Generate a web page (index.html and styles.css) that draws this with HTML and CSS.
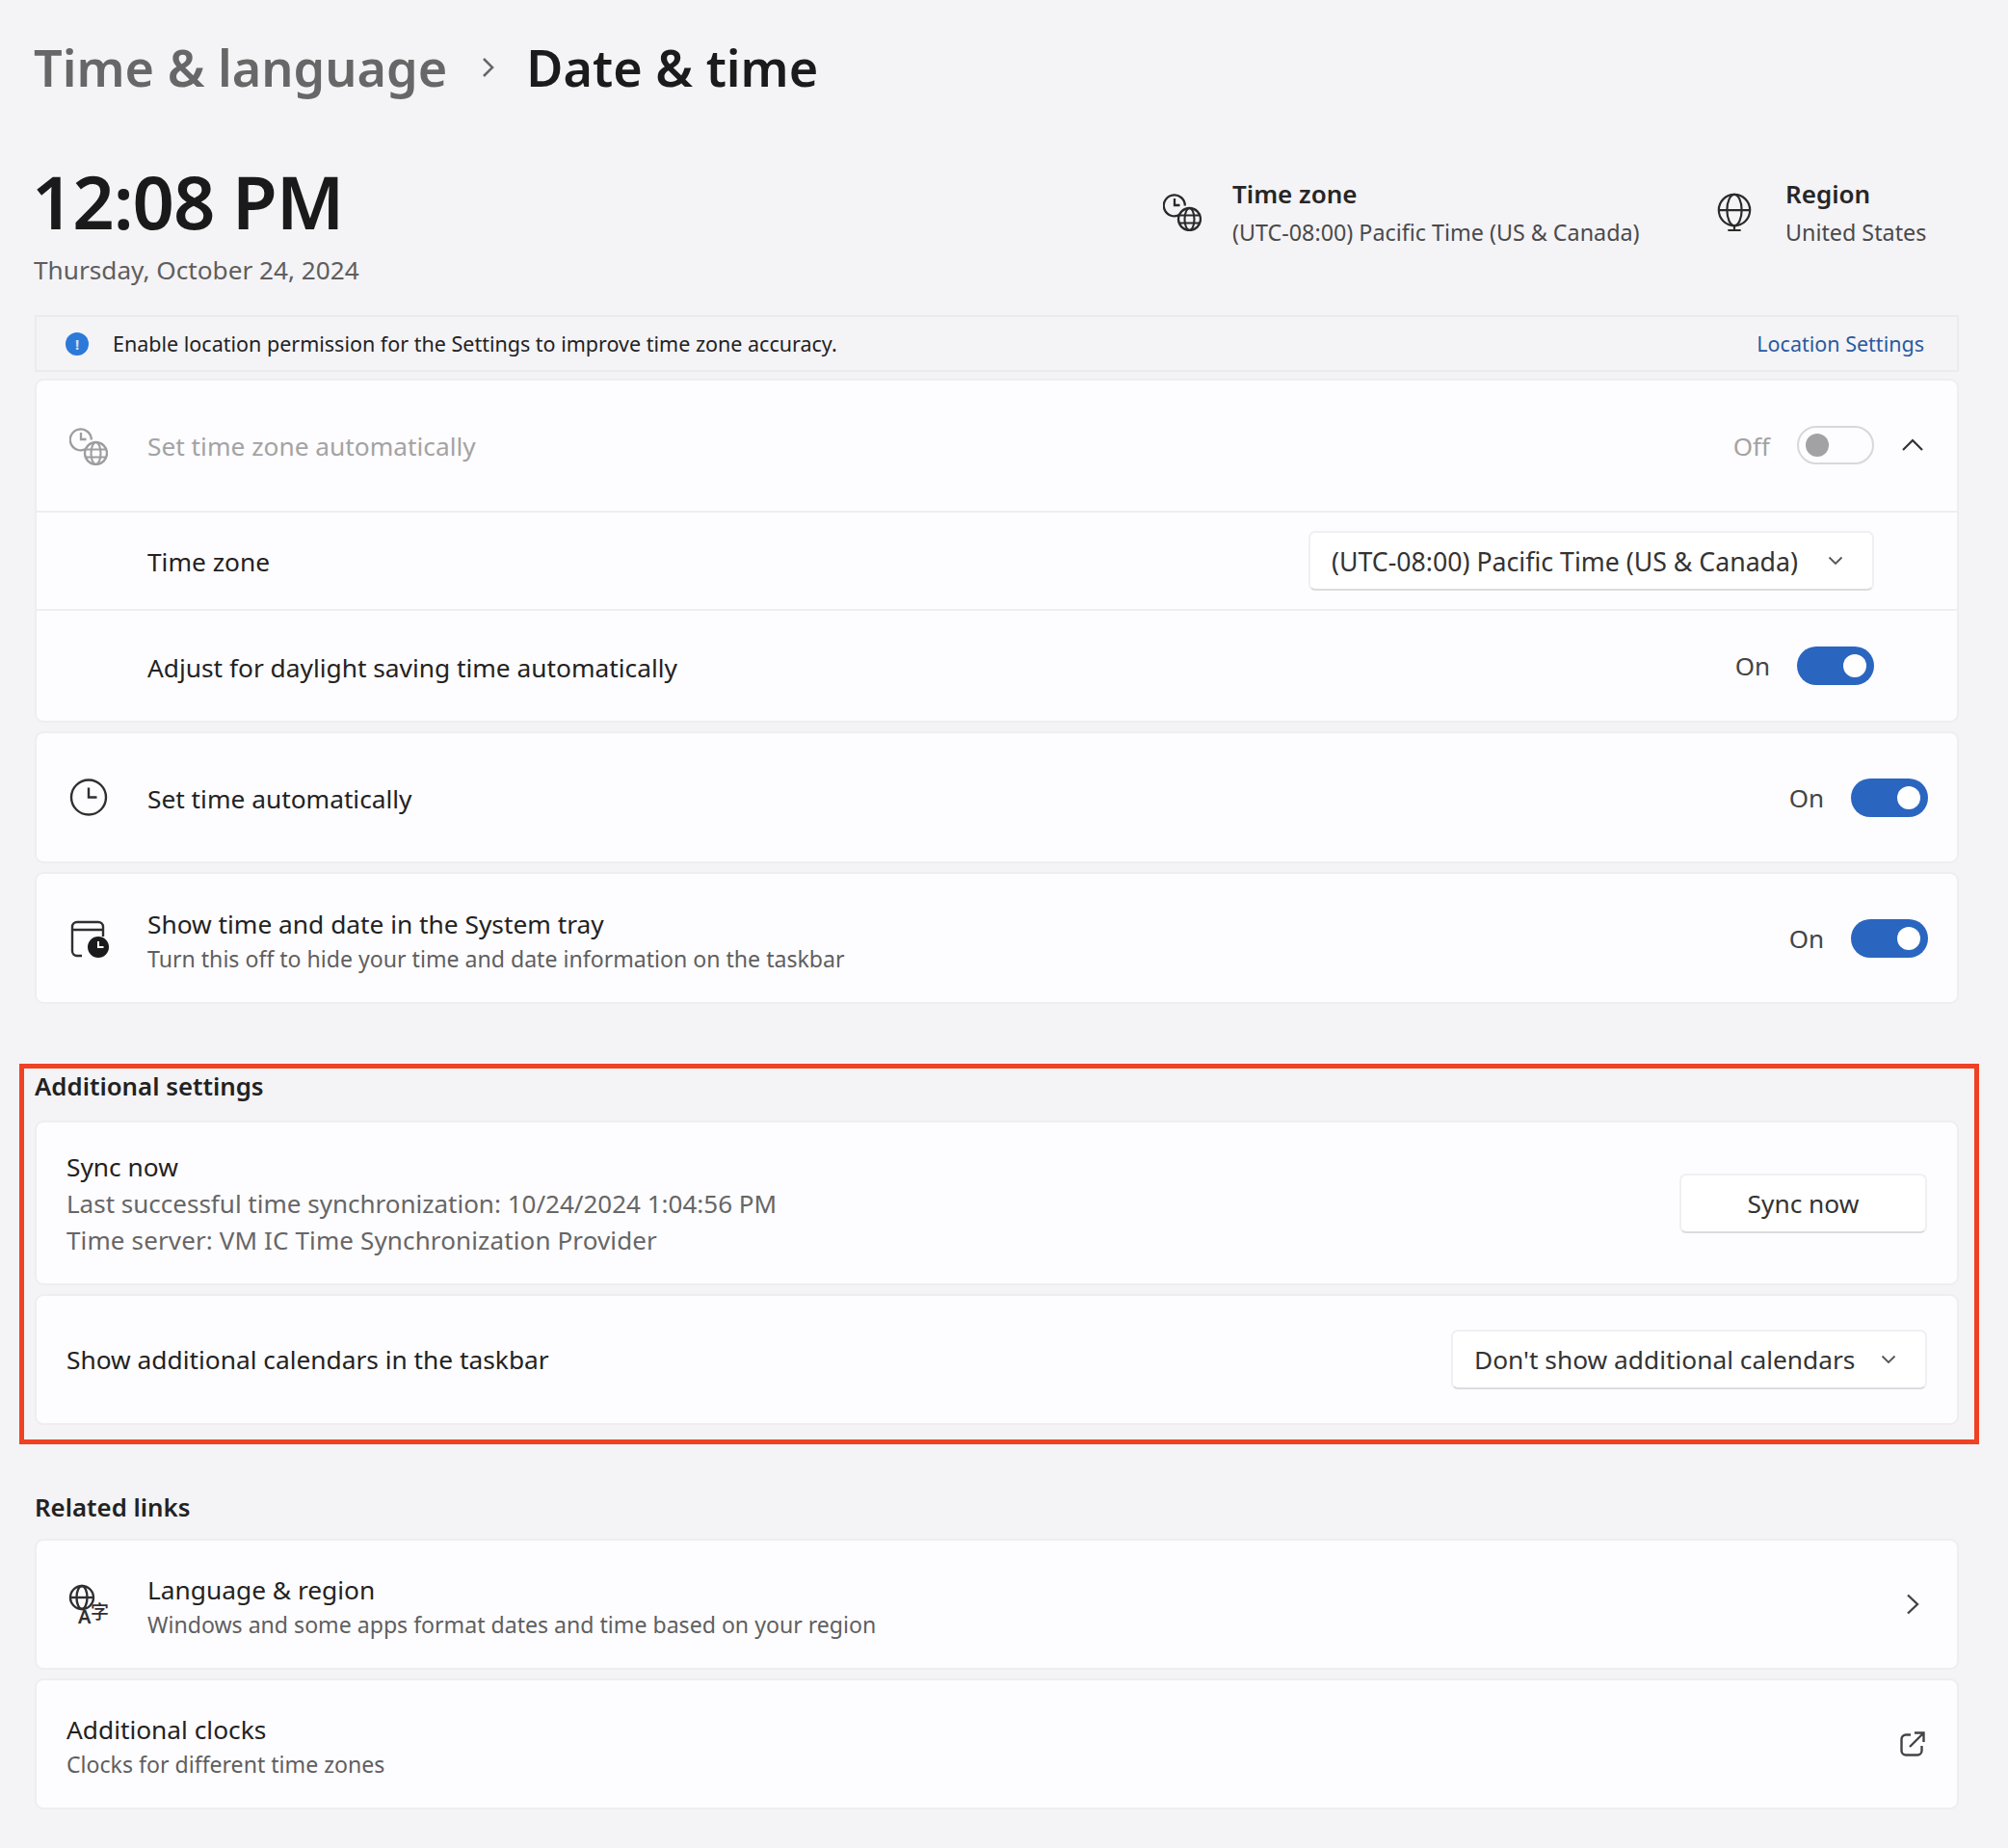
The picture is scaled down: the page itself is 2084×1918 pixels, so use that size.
FILE: index.html
```html
<!DOCTYPE html>
<html lang="en">
<head>
<meta charset="utf-8">
<title>Date &amp; time</title>
<link rel="stylesheet" href="styles.css">
</head>
<body>
<svg class="defs" width="0" height="0" aria-hidden="true">
  <defs>
    <symbol id="i-clockglobe" viewBox="0 0 40 40">
      <path d="M17.500 22.800A11 11 0 1 1 22.800 13.500M12 6v7h5.500" fill="none" stroke="currentColor" stroke-width="2.300"/>
      <circle cx="27.500" cy="27.500" r="11.500" fill="none" stroke="currentColor" stroke-width="2.300"/>
      <ellipse cx="27.500" cy="27.500" rx="5" ry="11.500" fill="none" stroke="currentColor" stroke-width="2.100"/>
      <path d="M16.500 23.500h22M16.500 31.500h22" fill="none" stroke="currentColor" stroke-width="2.100"/>
    </symbol>
  </defs>
</svg>
<main class="page">
  <h1 class="crumbs">
    <span class="crumb-parent">Time &amp; language</span>
    <svg class="crumb-sep" viewBox="0 0 14 22"><path d="M2 2l9 9-9 9" fill="none" stroke="currentColor" stroke-width="2.600"/></svg>
    <span class="crumb-current">Date &amp; time</span>
  </h1>

  <header class="clock">
    <div class="clock-main">
      <div class="clock-time">12:08 PM</div>
      <div class="clock-date">Thursday, October 24, 2024</div>
    </div>
    <div class="clock-fact clock-fact-zone">
      <svg class="fact-icon"><use href="#i-clockglobe"/></svg>
      <div>
        <div class="fact-title">Time zone</div>
        <div class="fact-value">(UTC-08:00) Pacific Time (US &amp; Canada)</div>
      </div>
    </div>
    <div class="clock-fact clock-fact-region">
      <svg class="fact-icon" viewBox="0 0 40 42">
        <g fill="none" stroke="currentColor" stroke-width="2.300">
          <circle cx="20" cy="19" r="17"/>
          <ellipse cx="20" cy="19" rx="8" ry="17"/>
          <path d="M3 19h34M20 36v5M13 41h14"/>
        </g>
      </svg>
      <div>
        <div class="fact-title">Region</div>
        <div class="fact-value">United States</div>
      </div>
    </div>
  </header>

  <div class="notice">
    <span class="notice-dot">!</span>
    <span class="notice-text">Enable location permission for the Settings to improve time zone accuracy.</span>
    <a class="notice-link">Location Settings</a>
  </div>

  <section class="card">
    <div class="row row-auto is-disabled">
      <svg class="row-icon"><use href="#i-clockglobe"/></svg>
      <div class="row-label">Set time zone automatically</div>
      <span class="toggle-label">Off</span>
      <span class="toggle toggle-off"></span>
      <svg class="row-chevron" viewBox="0 0 24 14"><path d="M2 12L12 2l10 10" fill="none" stroke="#333" stroke-width="2.200"/></svg>
    </div>
    <div class="row row-zone">
      <div class="row-label row-label-indent">Time zone</div>
      <div class="select select-zone"><span>(UTC-08:00) Pacific Time (US &amp; Canada)</span>
        <svg class="select-chevron" viewBox="0 0 16 10"><path d="M1.500 1.500L8 8l6.500-6.500" fill="none" stroke="currentColor" stroke-width="1.800"/></svg>
      </div>
      <span class="slot"></span>
    </div>
    <div class="row row-dst">
      <div class="row-label row-label-indent">Adjust for daylight saving time automatically</div>
      <span class="toggle-label">On</span>
      <span class="toggle toggle-on"></span>
      <span class="slot"></span>
    </div>
  </section>

  <section class="card card-single">
    <div class="row">
      <svg class="row-icon" viewBox="0 0 40 40"><g fill="none" stroke="currentColor" stroke-width="2.400"><circle cx="20" cy="19.500" r="18"/><path d="M20 9.500v10h8.500"/></g></svg>
      <div class="row-label">Set time automatically</div>
      <span class="toggle-label">On</span>
      <span class="toggle toggle-on"></span>
    </div>
  </section>

  <section class="card card-single">
    <div class="row">
      <svg class="row-icon" viewBox="0 0 40 40">
        <path d="M13 38H8a5 5 0 0 1-5-5V8a5 5 0 0 1 5-5h22a5 5 0 0 1 5 5v10M3 11h32" fill="none" stroke="currentColor" stroke-width="2.400"/>
        <circle cx="30" cy="29" r="11" fill="#1b1b1b"/>
        <path d="M30 23v6h5.500" fill="none" stroke="#fff" stroke-width="2"/>
      </svg>
      <div class="row-text">
        <div class="row-label">Show time and date in the System tray</div>
        <div class="row-sub">Turn this off to hide your time and date information on the taskbar</div>
      </div>
      <span class="toggle-label">On</span>
      <span class="toggle toggle-on"></span>
    </div>
  </section>

  <section class="highlight">
    <h2 class="group-title">Additional settings</h2>
    <div class="card card-sync">
      <div class="row row-plain">
        <div class="sync-text">
          <div class="row-label sync-line">Sync now</div>
          <div class="sync-line sync-muted">Last successful time synchronization: 10/24/2024 1:04:56 PM</div>
          <div class="sync-line sync-muted sync-server">Time server: VM IC Time Synchronization Provider</div>
        </div>
        <button class="button">Sync now</button>
      </div>
    </div>
    <div class="card card-cal">
      <div class="row row-plain">
        <div class="row-label row-grow">Show additional calendars in the taskbar</div>
        <div class="select select-cal"><span>Don't show additional calendars</span>
          <svg class="select-chevron" viewBox="0 0 16 10"><path d="M1.500 1.500L8 8l6.500-6.500" fill="none" stroke="currentColor" stroke-width="1.800"/></svg>
        </div>
      </div>
    </div>
  </section>

  <h2 class="group-title group-title-links">Related links</h2>
  <section class="card card-link">
    <div class="row">
      <svg class="row-icon" viewBox="0 0 40 40">
        <g fill="none" stroke="currentColor" stroke-width="2.400">
          <circle cx="13" cy="13" r="12"/><ellipse cx="13" cy="13" rx="5.500" ry="12"/><path d="M1 13h24"/>
        </g>
        <text class="icon-a" x="9" y="39.500">A</text>
        <text class="icon-zi" x="22" y="35">字</text>
      </svg>
      <div class="row-text">
        <div class="row-label">Language &amp; region</div>
        <div class="row-sub">Windows and some apps format dates and time based on your region</div>
      </div>
      <svg class="row-end-icon row-end-chevron" viewBox="0 0 14 22"><path d="M2 1.500L12 11 2 20.500" fill="none" stroke="currentColor" stroke-width="2.400"/></svg>
    </div>
  </section>
  <section class="card card-link">
    <div class="row row-plain">
      <div class="row-text">
        <div class="row-label">Additional clocks</div>
        <div class="row-sub">Clocks for different time zones</div>
      </div>
      <svg class="row-end-icon row-end-ext" viewBox="0 0 26 26"><path d="M11 3.500H6a4.500 4.500 0 0 0-4.500 4.500v12A4.500 4.500 0 0 0 6 24.500h12a4.500 4.500 0 0 0 4.500-4.500v-5M10 16L24 2M15 1.500h9.500V11" fill="none" stroke="currentColor" stroke-width="2.400"/></svg>
    </div>
  </section>
</main>
</body>
</html>
```
FILE: styles.css
```css
* { box-sizing: border-box; }
html, body { margin: 0; padding: 0; }
body {
  width: 2084px;
  height: 1918px;
  overflow: hidden;
  background: #f4f3f6;
  color: #1c1c1c;
  font-family: "Noto Sans", "Noto Sans CJK SC", sans-serif;
  font-size: 26px;
}
.defs { position: absolute; }
.page { padding: 0 51px 0 36px; }

.crumbs {
  display: flex;
  align-items: center;
  height: 140px;
  margin: 0 0 0 -1px;
  padding-bottom: 1px;
  font-size: 52.200px;
  font-weight: 600;
}
.crumb-parent { color: #676767; }
.crumb-current { color: #1b1b1b; }
.crumb-sep { width: 14px; height: 22px; margin: 0 32px 0 36px; color: #666; }

.clock {
  display: flex;
  height: 187px;
}
.clock-main { flex: 1; }
.clock-time { font-size: 76px; font-weight: 600; line-height: 96px; margin: 21px 0 0 -3px; letter-spacing: -1.1px; color: #1a1a1a; }
.clock-date { font-size: 26.200px; line-height: 34px; margin: 6px 0 0 -1px; color: #5e5e5e; }
.clock-fact { display: flex; align-items: flex-start; padding-top: 43px; }
.clock-fact-zone { width: 573px; }
.clock-fact-region { width: 253px; }
.fact-icon { width: 40px; height: 40px; flex: none; margin-top: 17px; margin-right: 32px; color: #2a2a2a; }
.clock-fact-region .fact-icon { margin-right: 33px; }
.fact-title { font-size: 26px; font-weight: 600; line-height: 36px; color: #262626; }
.fact-value { font-size: 23.300px; line-height: 32px; margin-top: 6px; color: #4a4a4a; }

.notice {
  display: flex;
  align-items: center;
  height: 59px;
  padding: 0 34px 0 30px;
  margin-bottom: 7px;
  border: 2px solid #ebeaed;
  font-size: 21.500px;
}
.notice-dot {
  width: 24px;
  height: 24px;
  margin-right: 25px;
  border-radius: 50%;
  background: #2b7ad9;
  color: #cfe2f8;
  font-size: 15px;
  font-weight: 700;
  line-height: 24px;
  text-align: center;
}
.notice-text { flex: 1; color: #222; }
.notice-link { color: #2a5a9e; }

.card {
  margin-bottom: 9px;
  background: #fdfcfe;
  border: 2px solid #eeedef;
  border-radius: 9px;
}
.card-single { height: 137px; }
.card-cal { height: 136px; }
.card-link { height: 136px; }
.card-sync { height: 171px; }
.row {
  display: flex;
  align-items: center;
  height: 100%;
  padding: 0 30px 0 34px;
}
.row-plain { padding-left: 31px; padding-right: 31px; }
.row-auto { height: 137px; padding-right: 34px; border-bottom: 2px solid #eeedef; }
.row-zone { height: 102px; border-bottom: 2px solid #eeedef; padding-right: 34px; }
.row-dst { height: 114px; padding-right: 34px; }
.row-icon { width: 40px; height: 40px; flex: none; margin-right: 41px; color: #2f2f2f; overflow: visible; }
.row-label { font-size: 26.300px; color: #222; }
.row > .row-label { flex: 1; padding-top: 2px; }
.row-auto > .row-label, .row > .row-grow { padding-top: 0; }
.row-dst > .row-label { padding-top: 3px; }
.row-label-indent { padding-left: 81px; }
.row-text { flex: 1; padding-top: 3px; }
.card-link .row-text { padding-top: 1px; }
.row-sub { font-size: 23.100px; line-height: 30px; margin-top: 2px; color: #5f5f5f; }
.row-text .row-label { line-height: 38px; }
.is-disabled .row-label, .is-disabled .toggle-label { color: #a3a3a3; }
.is-disabled .row-icon { color: #9d9d9d; }

.toggle-label { margin-right: 28px; font-size: 26px; color: #444; }
.toggle { flex: none; width: 80px; height: 40px; border-radius: 20px; display: flex; align-items: center; }
.toggle-on { background: #2a66c0; justify-content: flex-end; padding-right: 8px; }
.toggle-on::after { content: ""; width: 24px; height: 24px; border-radius: 50%; background: #fff; }
.toggle-off { border: 2px solid #d8d7da; background: #fdfcfe; padding-left: 7px; }
.toggle-off::after { content: ""; width: 24px; height: 24px; border-radius: 50%; background: #a2a2a4; }
.row-auto .toggle, .row-chevron { margin-bottom: 2px; }
.row-chevron { width: 24px; height: 14px; margin-left: 28px; flex: none; }
.slot { width: 52px; flex: none; }

.select, .button {
  display: flex;
  align-items: center;
  height: 62px;
  background: #fff;
  border: 2px solid #f0eff1;
  border-bottom-color: #dcdbdd;
  border-radius: 7px;
  color: #333;
  font-family: inherit;
  font-size: 26.300px;
}
.select-zone { width: 587px; padding-left: 22px; font-size: 26.700px; }
.select-cal { width: 494px; padding-left: 22px; }
.select span { flex: 1; white-space: nowrap; }
.select-chevron { width: 16px; height: 10px; margin-right: 30px; color: #555; flex: none; }
.button { width: 257px; justify-content: center; }

.sync-text { flex: 1; }
.sync-line { line-height: 38px; }
.sync-muted { font-size: 26px; color: #666; }
.sync-server { letter-spacing: 0.13px; }

.highlight {
  margin: 62px -21px 0 -16px;
  height: 395px;
  padding: 0 16px 0 11px;
  border: 5px solid #ef4123;
}
.group-title { margin: 0; font-size: 25.800px; font-weight: 600; line-height: 36px; color: #222; }
.highlight .group-title { height: 54px; }
.group-title-links { margin-top: 47px; margin-bottom: 15px; }
.row-end-icon { flex: none; color: #444; }
.row-end-chevron { width: 14px; height: 22px; margin-right: 9px; }
.row-end-ext { width: 26px; height: 26px; margin-right: 2px; }
.icon-a { font-family: "Noto Sans", sans-serif; font-size: 20px; font-weight: 600; fill: currentColor; }
.icon-zi { font-family: "Noto Sans CJK SC", sans-serif; font-size: 19px; font-weight: 500; fill: currentColor; }
```
